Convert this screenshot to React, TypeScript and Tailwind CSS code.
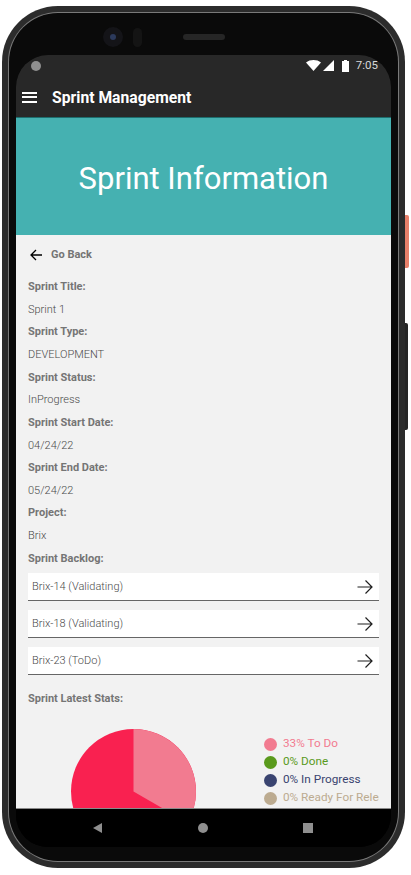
import React from "react";

const fields: [string, string][] = [
  ["Sprint Title:", "Sprint 1"],
  ["Sprint Type:", "DEVELOPMENT"],
  ["Sprint Status:", "InProgress"],
  ["Sprint Start Date:", "04/24/22"],
  ["Sprint End Date:", "05/24/22"],
  ["Project:", "Brix"],
];

const backlog = ["Brix-14 (Validating)", "Brix-18 (Validating)", "Brix-23 (ToDo)"];

const legend = [
  { label: "33% To Do", dot: "bg-[#f27b90]", text: "text-[#f27b90]" },
  { label: "0% Done", dot: "bg-[#5a9a1c]", text: "text-[#5a9a1c]" },
  { label: "0% In Progress", dot: "bg-[#3a4470]", text: "text-[#3a4470]" },
  { label: "0% Ready For Release", dot: "bg-[#bcab90]", text: "text-[#bcab90]" },
];

function ArrowRight() {
  return (
    <svg width="16" height="14" viewBox="0 0 16 14" fill="none" stroke="#1f1f1f" strokeWidth="1.2" className="mt-[1px]">
      <path d="M0.5 7H15M8.5 0.5L15 7L8.5 13.5" />
    </svg>
  );
}

export default function App() {
  return (
    <div className="w-[411px] h-[875px] bg-white overflow-hidden pt-[6px] pl-[2px] font-['Roboto',sans-serif]">
      <div className="relative w-[403px] h-[862px] rounded-[56px] bg-[#2c2c2c] p-[6px]">
        <div className="absolute left-[403px] top-[209px] w-[4px] h-[53px] rounded-r-[2px] bg-[#e8806a]" />
        <div className="absolute left-[403px] top-[317px] w-[3px] h-[107px] rounded-r-[2px] bg-[#262626]" />
        <div className="h-full rounded-[50px] bg-[#7a7a7a] p-px">
          <div className="relative h-full rounded-[49px] bg-[#0a0a0a] pt-[42px] px-[7px] pb-[14px]">
            <div className="absolute left-[94px] top-[14px] w-[20px] h-[20px] rounded-full bg-[#141418] flex items-center justify-center">
              <div className="w-[6px] h-[6px] rounded-full bg-[#2c3a5c]" />
            </div>
            <div className="absolute left-[124px] top-[15px] w-[9px] h-[19px] rounded-full bg-[#141414]" />
            <div className="absolute left-[174px] top-[21px] w-[42px] h-[6px] rounded-full bg-[#262626]" />

            <div className="h-full rounded-[32px] overflow-hidden flex flex-col bg-black">
              <div className="h-[24px] shrink-0 bg-[#282828] flex items-center justify-between pl-[15px] pr-[13px] pb-[3px]">
                <div className="w-[10px] h-[10px] rounded-full bg-[#8f8f8f]" />
                <div className="flex items-center gap-[5px]">
                  <svg width="15" height="11" viewBox="0 0 15 11">
                    <path d="M0 2.5C4 -0.8 11 -0.8 15 2.5L7.5 11Z" fill="#fff" />
                  </svg>
                  <svg width="11" height="11" viewBox="0 0 11 11" className="-ml-[3px]">
                    <path d="M11 0V11H0Z" fill="#fff" />
                  </svg>
                  <svg width="7" height="12" viewBox="0 0 7 12" className="ml-[3px]">
                    <path d="M2 0H5V1H7V12H0V1H2Z" fill="#fff" />
                  </svg>
                  <span className="text-[11.5px] leading-none text-[#d8d8d8] ml-[2px]">7:05</span>
                </div>
              </div>
              <div className="h-[39px] shrink-0 bg-[#282828] flex items-center pl-[6px] border-b border-[#1d6e6e]">
                <div className="w-[15px] flex flex-col gap-[2.5px] -mt-[2px]">
                  <div className="h-[2px] bg-white" />
                  <div className="h-[2px] bg-white" />
                  <div className="h-[2px] bg-white" />
                </div>
                <span className="ml-[15px] text-[15.7px] font-bold text-white leading-none -mt-[1px]">Sprint Management</span>
              </div>
              <div className="h-[117px] shrink-0 bg-[#45b1b1] flex items-center justify-center pt-[3px]">
                <span className="text-[31px] leading-none text-white">Sprint Information</span>
              </div>
              <div className="h-[574px] shrink-0 bg-[#f2f2f2] overflow-hidden pl-[12px] pr-[12px] border-b border-[#8a8a8a]">
                <div className="h-[39px] flex items-center pl-[2px]">
                  <svg width="12" height="12" viewBox="0 0 12 12" fill="none" stroke="#000" strokeWidth="1.3">
                    <path d="M12 6H1M6 1L1 6L6 11" />
                  </svg>
                  <span className="ml-[9px] text-[11px] font-bold text-[#757575] leading-none">Go Back</span>
                </div>
                <div className="flex flex-col pt-[2px]">
                  {fields.map(([k, v]) => (
                    <div key={k} className="flex flex-col">
                      <div className="h-[22.65px] flex items-center text-[11px] font-bold text-[#757575]">{k}</div>
                      <div className="h-[22.65px] flex items-center text-[11px] font-light text-[#4a4a4a]">{v}</div>
                    </div>
                  ))}
                </div>
                <div className="h-[22.5px] flex items-center text-[11px] font-bold text-[#757575]">Sprint Backlog:</div>
                <div className="flex flex-col gap-[9px] mt-[3px]">
                  {backlog.map((b) => (
                    <div key={b} className="h-[28px] bg-white border-b border-[#666] flex items-center justify-between pl-[4px] pr-[6px]">
                      <span className="pt-[2px] text-[11px] font-light text-[#4a4a4a]">{b}</span>
                      <ArrowRight />
                    </div>
                  ))}
                </div>
                <div className="mt-[15px] h-[19px] flex items-center text-[11px] font-bold text-[#757575]">Sprint Latest Stats:</div>
                <div className="flex mt-[20px]">
                  <svg width="125" height="125" viewBox="0 0 125 125" className="ml-[43px] shrink-0">
                    <circle cx="62.5" cy="62.5" r="62.5" fill="#f92150" />
                    <path d="M62.5 62.5V0A62.5 62.5 0 0 1 116.6 93.75Z" fill="#f27b90" />
                  </svg>
                  <div className="ml-[68px] mt-[6px] w-[115px] overflow-hidden shrink-0">
                    {legend.map((l) => (
                      <div key={l.label} className="h-[18px] flex items-center whitespace-nowrap">
                        <div className={`w-[13px] h-[13px] rounded-full shrink-0 ${l.dot}`} />
                        <span className={`ml-[6px] text-[11.75px] font-normal ${l.text}`}>{l.label}</span>
                      </div>
                    ))}
                  </div>
                </div>
              </div>
              <div className="flex-1 bg-black flex items-center">
                <svg width="9" height="10" viewBox="0 0 9 10" className="ml-[77px]">
                  <path d="M9 0V10L0 5Z" fill="#8f8f8f" />
                </svg>
                <div className="ml-[96px] w-[10px] h-[10px] rounded-full bg-[#8f8f8f]" />
                <div className="ml-[95px] w-[10px] h-[10px] bg-[#8f8f8f]" />
              </div>
            </div>
          </div>
        </div>
      </div>
    </div>
  );
}
